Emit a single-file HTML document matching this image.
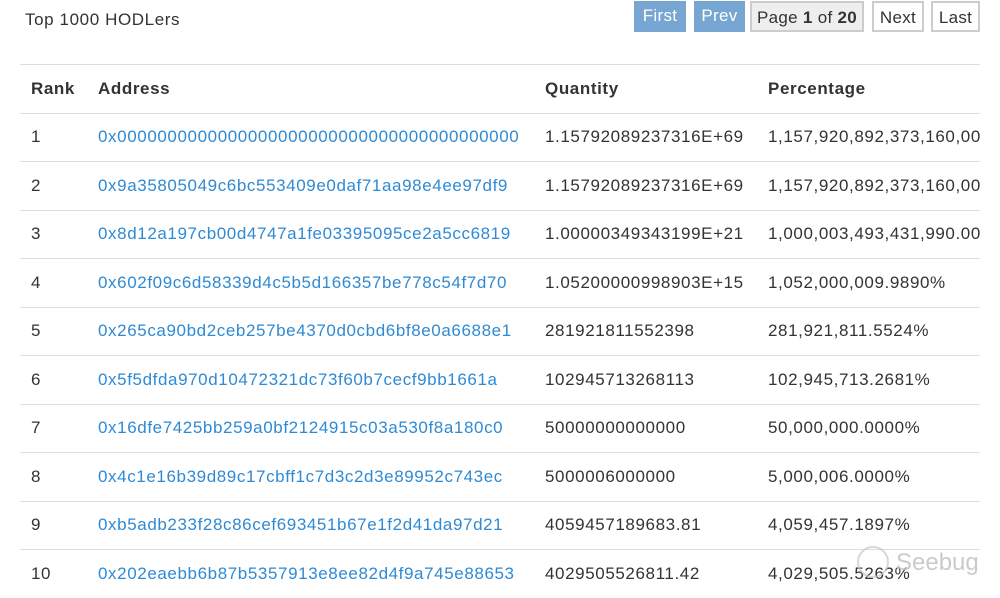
<!DOCTYPE html>
<html><head><style>
body{margin:0;width:1000px;height:592px;overflow:hidden;background:#fff;font-family:"Liberation Sans",Arial,sans-serif;color:#333;position:relative;letter-spacing:0.6px}
.title{position:absolute;left:25px;top:10px;font-size:17px}
.btn{position:absolute;top:1px;height:31px;line-height:30px;font-size:17px;text-align:center;box-sizing:border-box;letter-spacing:0.3px}
.b1{background:#78a6d2;color:#fff}
.b2{background:#eee;border:2px solid #ccc;color:#333}
.b3{background:#fff;border:2px solid #ccc;color:#333}
.wrap{position:absolute;left:20px;top:64px;width:960px;overflow:hidden}
table{border-collapse:collapse;font-size:17px;white-space:nowrap;width:1100px;table-layout:fixed}
td,th{border-top:1px solid #ddd;height:47.5px;padding:0 0 0 11px;text-align:left;vertical-align:middle}
th{font-weight:bold;border-bottom:1px solid #ddd}
a{color:#2f8ad4;text-decoration:none}
</style></head><body>
<div class="title">Top 1000 HODLers</div>
<div class="btn b1" style="left:634px;width:52px">First</div>
<div class="btn b1" style="left:694px;width:51px">Prev</div>
<div class="btn b2" style="left:750px;width:114px">Page <b>1</b> of <b>20</b></div>
<div class="btn b3" style="left:872px;width:52px">Next</div>
<div class="btn b3" style="left:931px;width:49px">Last</div>
<div class="wrap"><table>
<colgroup><col style="width:67px"><col style="width:447px"><col style="width:223px"><col></colgroup>
<tr><th>Rank</th><th>Address</th><th>Quantity</th><th>Percentage</th></tr>
<tr><td>1</td><td><a>0x0000000000000000000000000000000000000000</a></td><td>1.15792089237316E+69</td><td>1,157,920,892,373,160,000</td></tr>
<tr><td>2</td><td><a>0x9a35805049c6bc553409e0daf71aa98e4ee97df9</a></td><td>1.15792089237316E+69</td><td>1,157,920,892,373,160,000</td></tr>
<tr><td>3</td><td><a>0x8d12a197cb00d4747a1fe03395095ce2a5cc6819</a></td><td>1.00000349343199E+21</td><td>1,000,003,493,431,990.000</td></tr>
<tr><td>4</td><td><a>0x602f09c6d58339d4c5b5d166357be778c54f7d70</a></td><td>1.05200000998903E+15</td><td>1,052,000,009.9890%</td></tr>
<tr><td>5</td><td><a>0x265ca90bd2ceb257be4370d0cbd6bf8e0a6688e1</a></td><td>281921811552398</td><td>281,921,811.5524%</td></tr>
<tr><td>6</td><td><a>0x5f5dfda970d10472321dc73f60b7cecf9bb1661a</a></td><td>102945713268113</td><td>102,945,713.2681%</td></tr>
<tr><td>7</td><td><a>0x16dfe7425bb259a0bf2124915c03a530f8a180c0</a></td><td>50000000000000</td><td>50,000,000.0000%</td></tr>
<tr><td>8</td><td><a>0x4c1e16b39d89c17cbff1c7d3c2d3e89952c743ec</a></td><td>5000006000000</td><td>5,000,006.0000%</td></tr>
<tr><td>9</td><td><a>0xb5adb233f28c86cef693451b67e1f2d41da97d21</a></td><td>4059457189683.81</td><td>4,059,457.1897%</td></tr>
<tr><td>10</td><td><a>0x202eaebb6b87b5357913e8ee82d4f9a745e88653</a></td><td>4029505526811.42</td><td>4,029,505.5263%</td></tr>
</table></div>
<div style="position:absolute;left:857px;top:546px;width:28px;height:28px;border:2px solid rgba(200,200,200,.7);border-radius:50%"></div>
<div style="position:absolute;left:896px;top:549px;font-size:24px;color:rgba(190,190,190,.8);letter-spacing:0">Seebug</div>
</body></html>
